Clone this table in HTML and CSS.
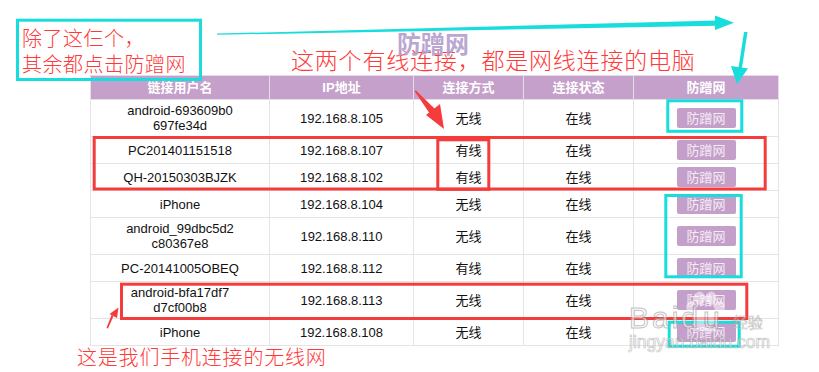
FILE: index.html
```html
<!DOCTYPE html>
<html lang="zh-CN">
<head>
<meta charset="utf-8">
<title>防蹭网</title>
<link rel="stylesheet" href="styles.css">
</head>
<body>
<div class="stage">
  <div class="table-wrap">
    <table class="devices">
      <colgroup>
        <col class="c1"><col class="c2"><col class="c3"><col class="c4"><col class="c5">
      </colgroup>
      <thead>
        <tr><th>链接用户名</th><th>IP地址</th><th>连接方式</th><th>连接状态</th><th>防蹭网</th></tr>
      </thead>
      <tbody>
        <tr><td>android-693609b0<br>697fe34d</td><td>192.168.8.105</td><td>无线</td><td>在线</td><td><span class="btn">防蹭网</span></td></tr>
        <tr><td>PC201401151518</td><td>192.168.8.107</td><td>有线</td><td>在线</td><td><span class="btn">防蹭网</span></td></tr>
        <tr><td>QH-20150303BJZK</td><td>192.168.8.102</td><td>有线</td><td>在线</td><td><span class="btn">防蹭网</span></td></tr>
        <tr><td>iPhone</td><td>192.168.8.104</td><td>无线</td><td>在线</td><td><span class="btn">防蹭网</span></td></tr>
        <tr><td>android_99dbc5d2<br>c80367e8</td><td>192.168.8.110</td><td>无线</td><td>在线</td><td><span class="btn">防蹭网</span></td></tr>
        <tr><td>PC-20141005OBEQ</td><td>192.168.8.112</td><td>有线</td><td>在线</td><td><span class="btn">防蹭网</span></td></tr>
        <tr><td>android-bfa17df7<br>d7cf00b8</td><td>192.168.8.113</td><td>无线</td><td>在线</td><td><span class="btn">防蹭网</span></td></tr>
        <tr><td>iPhone</td><td>192.168.8.108</td><td>无线</td><td>在线</td><td><span class="btn">防蹭网</span></td></tr>
      </tbody>
    </table>
  </div>

  <svg class="marks" width="819" height="372" viewBox="0 0 819 372" xmlns="http://www.w3.org/2000/svg">
    <!-- cyan arrows -->
    <polygon fill="#19dcdc" points="217,33.6 717,20.5 717,25.8 217,34.8"/>
    <polygon fill="#19dcdc" points="715,15.5 734,22.8 715,30"/>
    <polygon fill="#19dcdc" points="744,32 747.5,32 742,68 738.5,68"/>
    <polygon fill="#19dcdc" points="731,66 748,68.5 737,84"/>
    <!-- red arrows -->
    <polygon fill="#f53c3c" points="414.5,91 416,90.5 436,110 430,114"/>
    <polygon fill="#f53c3c" points="426,115 440,104 444,129"/>
    <polygon fill="#f53c3c" points="106.5,328 108,328.6 113.5,316 111.5,315"/>
    <polygon fill="#f53c3c" points="109.5,314 117,318 118.5,307.5"/>
    <!-- boxes -->
    <rect class="cy" x="17.5" y="20.2" width="183" height="59.3"/>
    <rect class="cy" x="667.8" y="100.8" width="74" height="30.5"/>
    <rect class="cy" x="665.8" y="195.5" width="75.4" height="81.3"/>
    <rect class="cy" x="669.2" y="322.2" width="70" height="24"/>
    <rect class="rd" x="94.2" y="137.5" width="671" height="51.5"/>
    <rect class="rd" x="437.8" y="139.8" width="51" height="49.5"/>
    <rect class="rd" x="121.5" y="284.2" width="625.3" height="34.3"/>
  </svg>

  <div class="note note-left">除了这仨个，<br>其余都点击防蹭网</div>
  <div class="note note-top">这两个有线连接，都是网线连接的电脑</div>
  <div class="note note-bottom">这是我们手机连接的无线网</div>
  <div class="brand">防蹭网</div>

  <div class="baidu">
    <svg class="paw" width="46" height="46" viewBox="0 0 44 44" xmlns="http://www.w3.org/2000/svg">
      <ellipse cx="9" cy="16" rx="5" ry="6.5"/>
      <ellipse cx="17" cy="7" rx="5" ry="6.5"/>
      <ellipse cx="28" cy="7" rx="5" ry="6.5"/>
      <ellipse cx="36" cy="16" rx="5" ry="6.5"/>
      <path d="M22 20 C15 20 9 30 10 35 C11 40 17 39 22 38 C27 39 33 40 34 35 C35 30 29 20 22 20 Z"/>
    </svg>
    <div class="baidu-row"><span class="bai">Bai</span><span class="du">du</span><span class="jy">经验</span></div>
    <div class="baidu-url">jingyan.baidu.com</div>
  </div>
</div>
</body>
</html>
```

FILE: styles.css
```css
html, body {
  margin: 0;
  padding: 0;
  background: #ffffff;
}

.stage {
  position: relative;
  width: 819px;
  height: 372px;
  overflow: hidden;
  background: #ffffff;
  font-family: "Liberation Sans", "Noto Sans CJK SC", sans-serif;
}

.table-wrap {
  padding: 75px 0 0 90px;
}

.devices {
  border-collapse: collapse;
  table-layout: fixed;
  width: 688px;
  font-size: 13px;
  color: #111111;
}

.c1 { width: 179px; }
.c2 { width: 144px; }
.c3 { width: 110px; }
.c4 { width: 110px; }
.c5 { width: 145px; }

.devices th {
  background: #c4a0ca;
  color: #ffffff;
  font-weight: bold;
  font-family: "Liberation Sans", "Noto Sans CJK SC", sans-serif;
  line-height: 17px;
  padding: 3px 2px;
  border: 1px solid #e6dcea;
  text-align: center;
}

.devices td {
  border: 1px solid #e4e4e4;
  padding: 3px 2px;
  line-height: 15px;
  text-align: center;
  vertical-align: middle;
}

.btn {
  display: inline-block;
  width: 59px;
  height: 20px;
  line-height: 20px;
  vertical-align: middle;
  background: #c49fca;
  color: #f4ebf4;
  border-radius: 2px;
  font-size: 13px;
  font-family: "Noto Sans CJK SC", sans-serif;
}

.marks {
  position: absolute;
  left: 0;
  top: 0;
}

.marks .cy {
  fill: none;
  stroke: #19dcdc;
  stroke-width: 3;
}

.marks .rd {
  fill: none;
  stroke: #f53c3c;
  stroke-width: 3;
}

.note {
  position: absolute;
  color: #ff3838;
  font-family: "Noto Sans CJK SC", sans-serif;
  font-weight: 300;
  white-space: nowrap;
}

.note-left {
  left: 22px;
  top: 25px;
  font-size: 20px;
  line-height: 26px;
  letter-spacing: 0.5px;
}

.note-top {
  left: 291px;
  top: 43px;
  font-size: 23px;
  line-height: 32px;
  letter-spacing: 0.8px;
}

.note-bottom {
  left: 77px;
  top: 343px;
  font-size: 20px;
  line-height: 28px;
  letter-spacing: 0.8px;
}

.brand {
  position: absolute;
  left: 397px;
  top: 27px;
  font-family: "Noto Sans CJK SC", sans-serif;
  font-weight: bold;
  font-size: 24px;
  line-height: 32px;
  color: #b69fcf;
  opacity: 0.92;
}

.baidu {
  position: absolute;
  left: 629px;
  top: 301px;
  width: 160px;
  opacity: 0.6;
  white-space: nowrap;
}

.paw {
  position: absolute;
  left: 53px;
  top: -10px;
  fill: #ffffff;
  opacity: 0.85;
}

.baidu-row {
  position: relative;
  font-family: "Liberation Sans", sans-serif;
  font-size: 30px;
  line-height: 34px;
  height: 34px;
  color: #ffffff;
  -webkit-text-stroke: 1px #9a9a9a;
}

.bai { letter-spacing: 3px; }
.du { letter-spacing: 5px; }
.jy {
  font-family: "Noto Sans CJK SC", sans-serif;
  font-size: 15px;
  margin-left: 8px;
  -webkit-text-stroke: 0.6px #9a9a9a;
}

.baidu-url {
  position: relative;
  margin-top: -3px;
  font-family: "Liberation Sans", sans-serif;
  font-size: 17.5px;
  line-height: 20px;
  color: #ffffff;
  -webkit-text-stroke: 0.7px #a0a0a0;
}
```
